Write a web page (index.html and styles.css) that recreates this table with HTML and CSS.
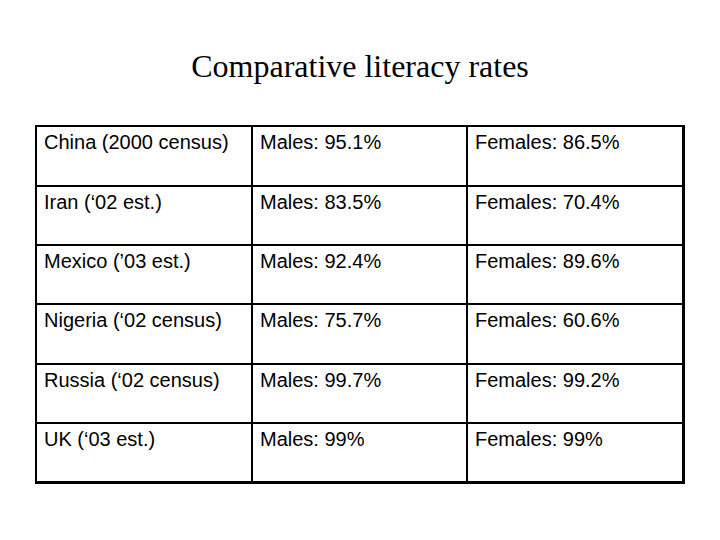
FILE: index.html
```html
<!DOCTYPE html>
<html>
<head>
<meta charset="utf-8">
<link rel="stylesheet" href="styles.css">
</head>
<body>
<h1 class="title">Comparative literacy rates</h1>
<div class="table">
  <div class="cell">China (2000 census)</div><div class="cell">Males: 95.1%</div><div class="cell last-col">Females: 86.5%</div>
  <div class="cell">Iran (‘02 est.)</div><div class="cell">Males: 83.5%</div><div class="cell last-col">Females: 70.4%</div>
  <div class="cell">Mexico (’03 est.)</div><div class="cell">Males: 92.4%</div><div class="cell last-col">Females: 89.6%</div>
  <div class="cell">Nigeria (‘02 census)</div><div class="cell">Males: 75.7%</div><div class="cell last-col">Females: 60.6%</div>
  <div class="cell">Russia (‘02 census)</div><div class="cell">Males: 99.7%</div><div class="cell last-col">Females: 99.2%</div>
  <div class="cell last-row">UK (‘03 est.)</div><div class="cell last-row">Males: 99%</div><div class="cell last-row last-col">Females: 99%</div>
</div>
</body>
</html>
```
FILE: styles.css
```css
html, body {
  margin: 0;
  padding: 0;
  background: #fff;
}
body {
  width: 720px;
  height: 540px;
  overflow: hidden;
}
.title {
  margin: 0;
  padding-top: 48px;
  font-family: "Liberation Serif", "Times New Roman", serif;
  font-weight: normal;
  font-size: 32px;
  line-height: 37px;
  text-align: center;
  color: #000;
}
.table {
  margin: 40px 0 0 35px;
  width: 650px;
  box-sizing: border-box;
  border-style: solid;
  border-color: #000;
  border-width: 2px 3px 3px 2px;
  display: grid;
  grid-template-columns: 216px 215px 214px;
  grid-template-rows: 60px 59px 59px 60px 59px 57px;
  font-family: "Liberation Sans", Arial, sans-serif;
  font-size: 20px;
  color: #000;
}
.cell {
  box-sizing: border-box;
  border-right: 2px solid #000;
  border-bottom: 2px solid #000;
  padding: 4px 0 0 7px;
  line-height: 23px;
  white-space: nowrap;
}
.last-col {
  border-right: none;
}
.last-row {
  border-bottom: none;
}
```
